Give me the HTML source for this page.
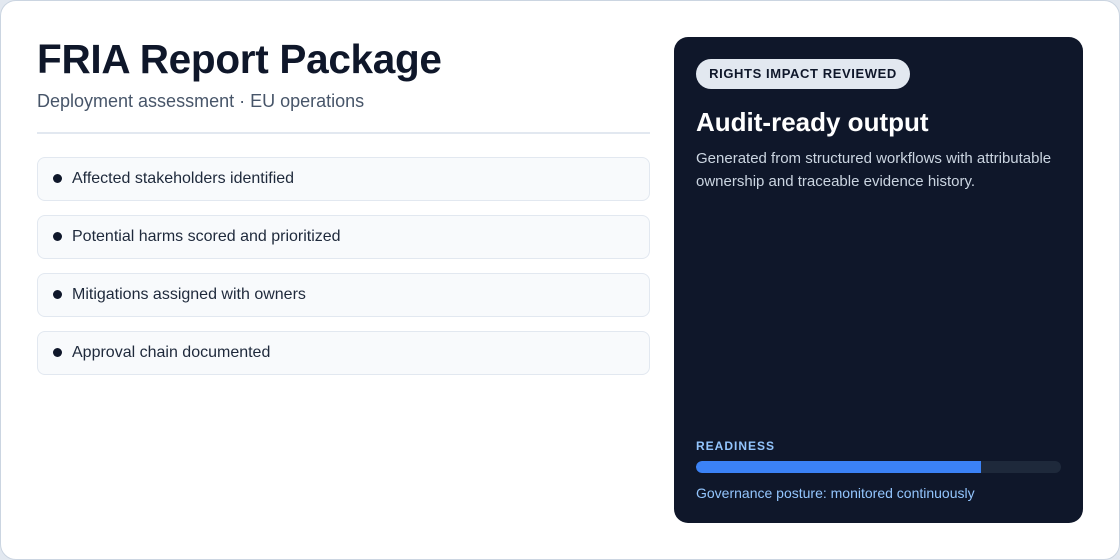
<!DOCTYPE html>
<html><head><meta charset="utf-8"><style>
*{box-sizing:border-box;margin:0;padding:0}
html,body{width:1120px;height:560px;background:#e2e8f0;font-family:"Liberation Sans",Arial,sans-serif;overflow:hidden}
.card{position:absolute;left:0;top:0;width:1120px;height:560px;background:#fff;border:1px solid #cbd5e1;border-radius:16px}
h1{position:absolute;left:36px;top:35px;font-size:40.5px;font-weight:700;color:#0f172a;letter-spacing:-0.3px}
.sub{position:absolute;left:36px;top:90px;font-size:18px;color:#475569}
.div{position:absolute;left:36px;top:131px;width:613px;height:2px;background:#e2e8f0}
.item{position:absolute;left:36px;width:613px;height:44px;background:#f8fafc;border:1px solid #e2e8f0;border-radius:8px;font-size:16px;color:#1e293b;padding-left:34px;line-height:42px}
.item:before{content:"";position:absolute;left:15px;top:16px;width:9px;height:9px;border-radius:50%;background:#0f172a}
.dark{position:absolute;left:673px;top:36px;width:409px;height:486px;background:#0f172a;border-radius:14px}
.badge{position:absolute;left:22px;top:22px;height:30px;width:214px;background:#e2e8f0;border-radius:15px;font-size:13px;font-weight:700;color:#0f172a;letter-spacing:0.6px;line-height:30px;text-align:center}
.h2{position:absolute;left:22px;top:70px;font-size:26px;font-weight:700;color:#fff}
.p{position:absolute;left:22px;top:110px;width:390px;font-size:15px;line-height:23px;color:#cbd5e1}
.rl{position:absolute;left:22px;top:402px;font-size:12px;font-weight:700;letter-spacing:1px;color:#93c5fd}
.bar{position:absolute;left:22px;top:424px;width:365px;height:12px;border-radius:6px;background:#1e293b;overflow:hidden}
.bar i{display:block;width:285px;height:12px;background:#3b82f6;border-radius:6px 0 0 6px}
.ft{position:absolute;left:22px;top:448px;font-size:14px;color:#93c5fd}
</style></head><body>
<div class="card">
<h1>FRIA Report Package</h1>
<div class="sub">Deployment assessment · EU operations</div>
<div class="div"></div>
<div class="item" style="top:156px">Affected stakeholders identified</div>
<div class="item" style="top:214px">Potential harms scored and prioritized</div>
<div class="item" style="top:272px">Mitigations assigned with owners</div>
<div class="item" style="top:330px">Approval chain documented</div>
<div class="dark">
<div class="badge">RIGHTS IMPACT REVIEWED</div>
<div class="h2">Audit-ready output</div>
<div class="p">Generated from structured workflows with attributable ownership and traceable evidence history.</div>
<div class="rl">READINESS</div>
<div class="bar"><i></i></div>
<div class="ft">Governance posture: monitored continuously</div>
</div>
</div>
</body></html>
